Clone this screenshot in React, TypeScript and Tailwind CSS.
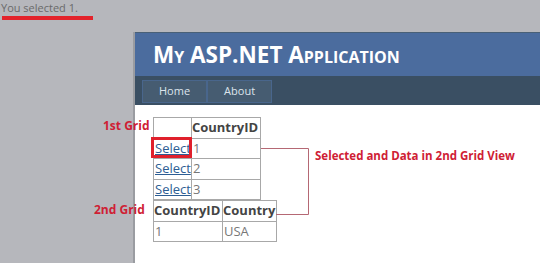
import React from 'react';

const grid1 = ['1', '2', '3'];

const App: React.FC = () => {
    return (
        <div className="relative w-[540px] h-[263px] overflow-hidden bg-[#b6b7bc] font-['Open_Sans',sans-serif]">
            {/* status line */}
            <div className="h-[32px] pt-[1px]">
                <p className="pl-[1px] text-[11px] leading-[14px] text-[#6a6a6a]">You selected 1.</p>
                <div className="ml-[2px] mt-[1px] w-[91px] h-[4px] bg-[#e3232b]" />
            </div>

            {/* site page */}
            <div className="ml-[133px] h-[231px] border-l-2 border-[#9a9ca1] bg-white">
                <header className="h-[44px] border-t border-[#496077] bg-[#4b6c9e] pl-[18px] pt-[8px]">
                    <h1 className="font-bold text-white text-[22.5px] leading-[28px] [font-variant:small-caps]">My ASP.NET Application</h1>
                </header>
                <nav className="h-[29px] bg-[#3a4f63] pl-[7px] pt-[4px] flex">
                    <a className="h-[23px] px-[16px] flex items-center border border-[#4b6c9e]/60 bg-[#465c71] text-[11px] text-[#dde4ec]">Home</a>
                    <a className="h-[23px] px-[16px] flex items-center border border-[#4b6c9e]/60 bg-[#465c71] text-[11px] text-[#dde4ec]">About</a>
                </nav>

                <div className="pt-[12px] pl-[18px] text-[13px] text-[#777]">
                    <table className="border-collapse">
                        <thead>
                            <tr className="h-[20px]">
                                <th className="w-[37px] border border-[#a8a8a8] p-0"></th>
                                <th className="w-[69px] border border-[#a8a8a8] p-0 text-left font-bold text-[#444]">CountryID</th>
                            </tr>
                        </thead>
                        <tbody>
                            {grid1.map((id) => (
                                <tr key={id} className="h-[20px]">
                                    <td className="border border-[#a8a8a8] p-0 pl-[1px]">
                                        <a className="text-[#2d5d93] underline">Select</a>
                                    </td>
                                    <td className="border border-[#a8a8a8] p-0 pl-[1px]">{id}</td>
                                </tr>
                            ))}
                        </tbody>
                    </table>
                    <table className="border-collapse">
                        <thead>
                            <tr className="h-[20px]">
                                <th className="w-[69px] border border-[#a8a8a8] p-0 text-left font-bold text-[#444]">CountryID</th>
                                <th className="w-[54px] border border-[#a8a8a8] p-0 text-left font-bold text-[#444]">Country</th>
                            </tr>
                        </thead>
                        <tbody>
                            <tr className="h-[20px]">
                                <td className="border border-[#a8a8a8] p-0 pl-[1px]">1</td>
                                <td className="border border-[#a8a8a8] p-0 pl-[1px]">USA</td>
                            </tr>
                        </tbody>
                    </table>
                </div>
            </div>

            {/* annotations */}
            <span className="absolute left-[103px] top-[118px] text-[12px] font-bold leading-[16px] text-[#cf2034]">1st Grid</span>
            <span className="absolute left-[94px] top-[202px] text-[12px] font-bold leading-[16px] text-[#cf2034]">2nd Grid</span>
            <div className="absolute left-[151px] top-[137px] w-[41px] h-[21px] border-[3px] border-[#e0202c]" />
            <svg className="absolute left-[258px] top-[146px]" width="54" height="72" viewBox="0 0 54 72">
                <polyline points="3,2.5 50.5,2.5 50.5,68.5 18,68.5" fill="none" stroke="#b56874" strokeWidth="1" />
            </svg>
            <span className="absolute left-[315px] top-[149px] text-[11.5px] font-bold leading-[14px] text-[#cf2034]">Selected and Data in 2nd Grid View</span>
        </div>
    );
};

export default App;
